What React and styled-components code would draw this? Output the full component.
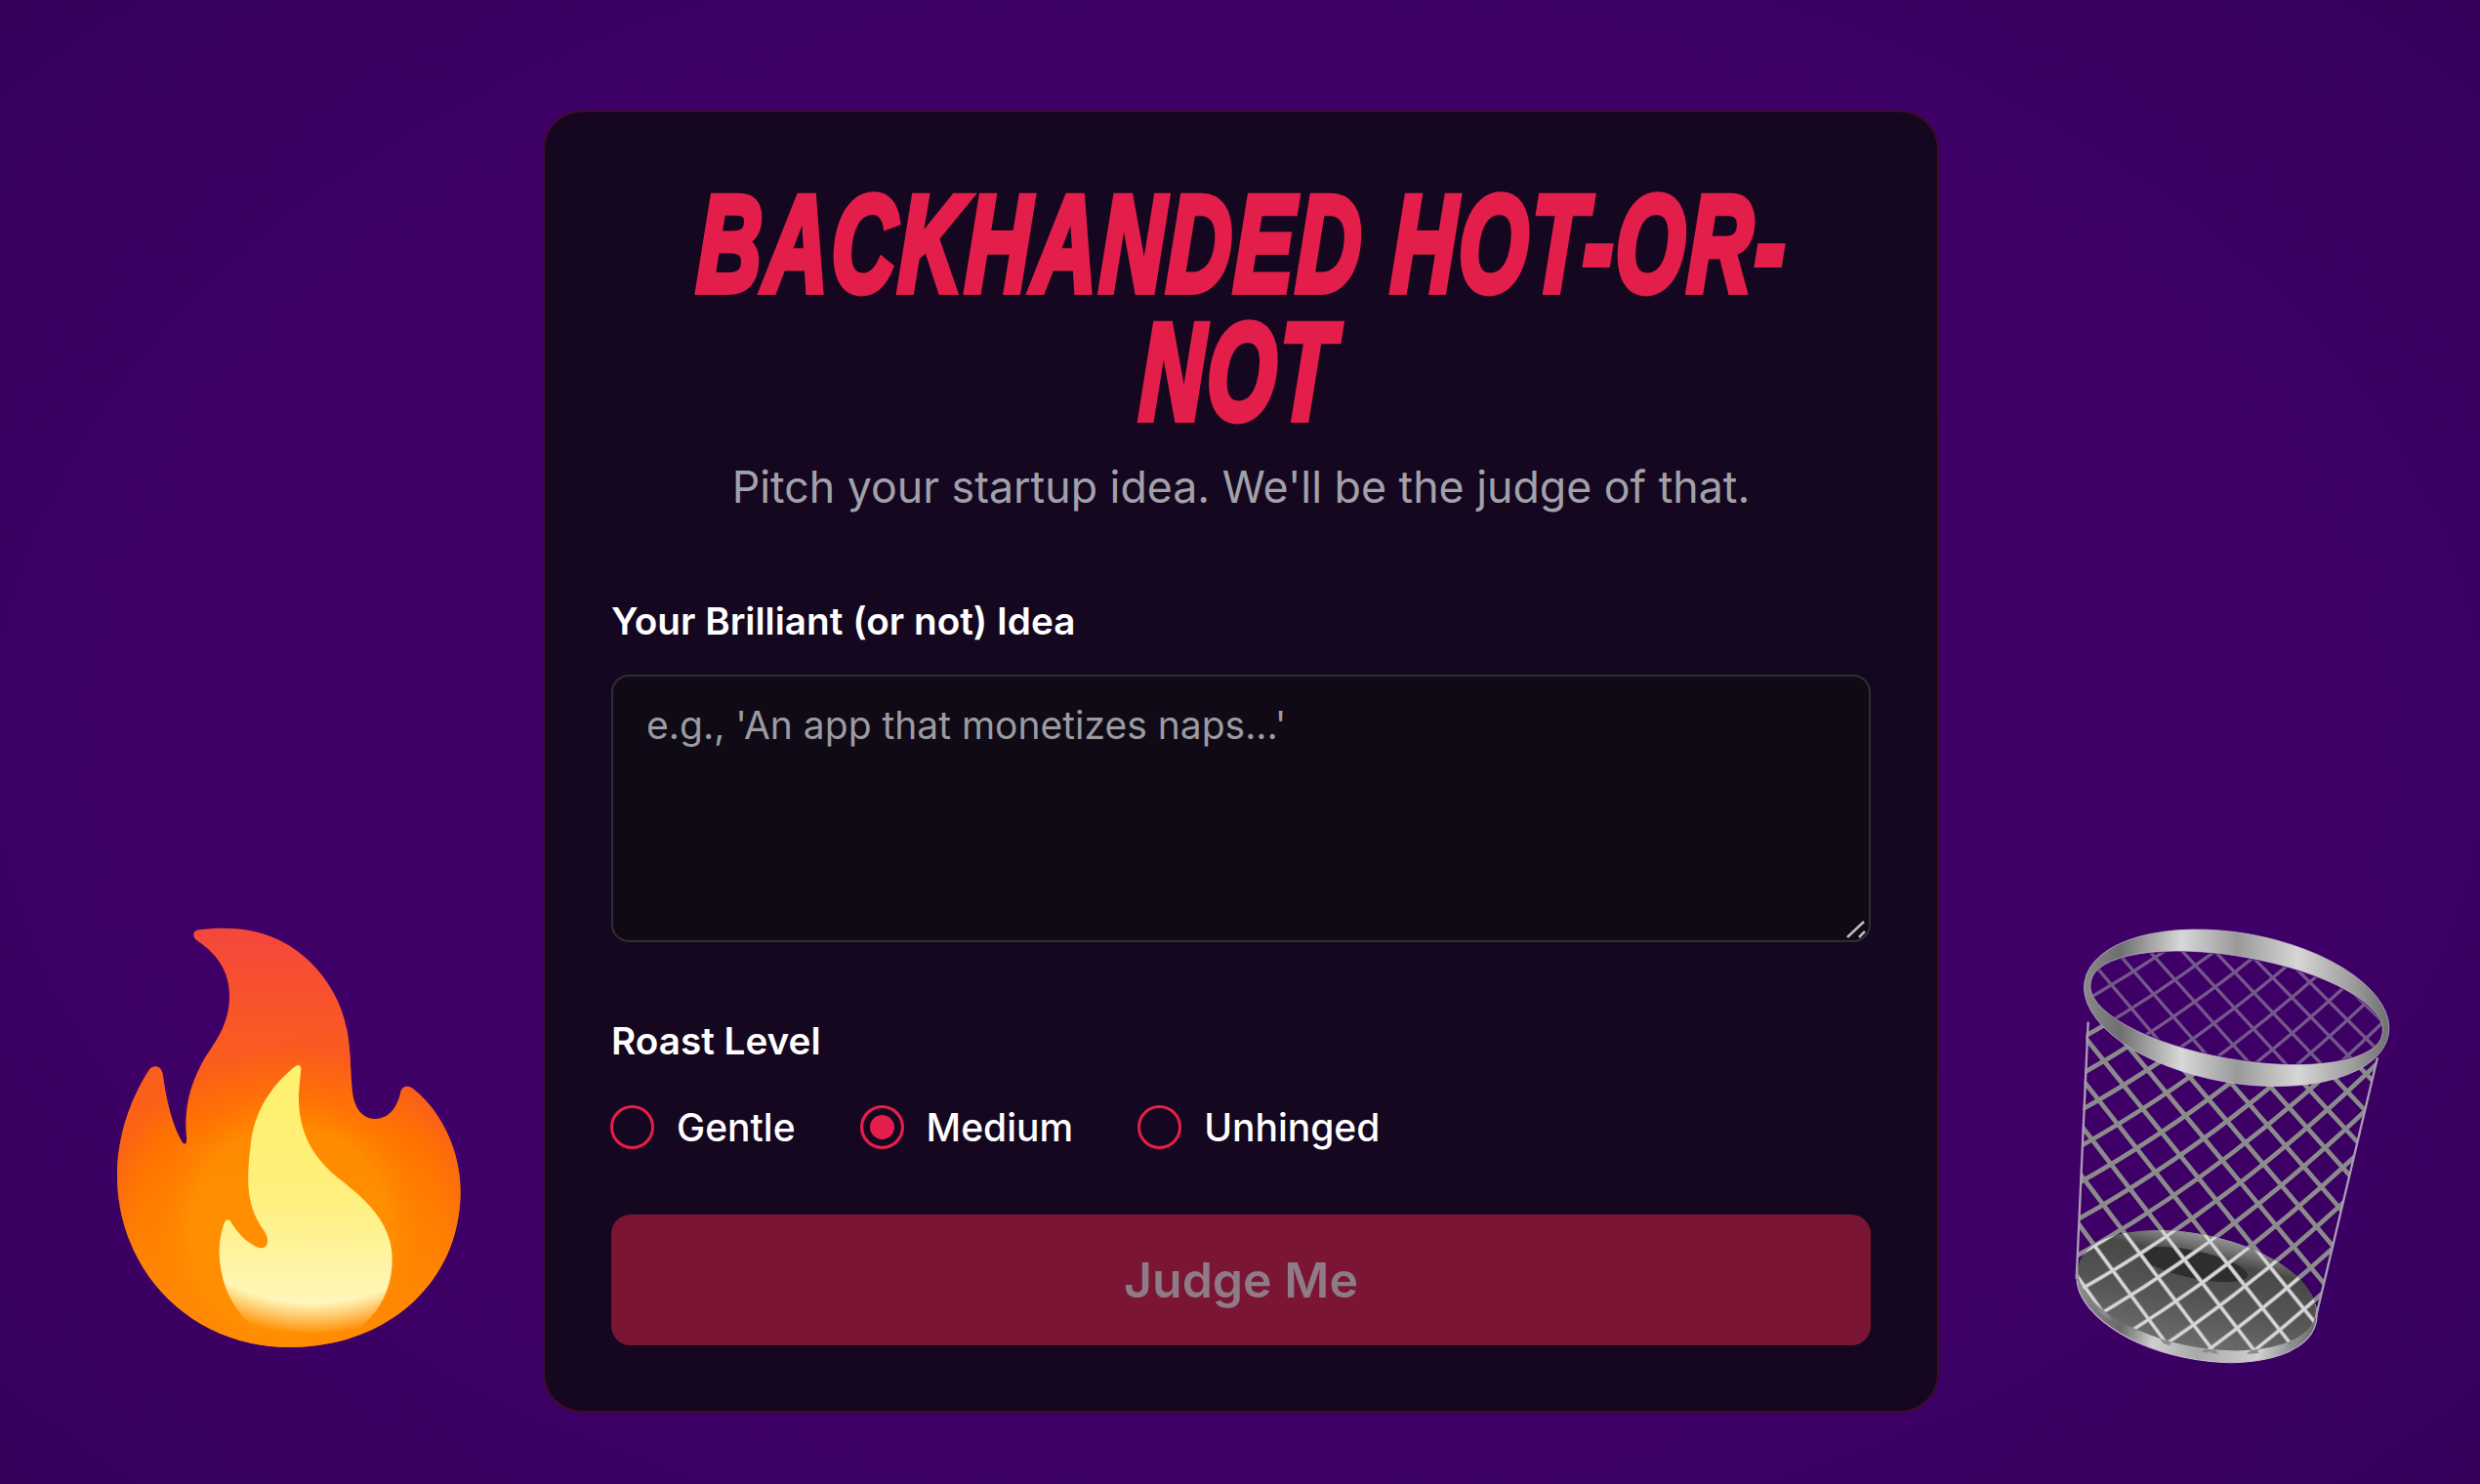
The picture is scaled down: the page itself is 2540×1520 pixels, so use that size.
import React from 'react';
import styled, { createGlobalStyle } from 'styled-components';

const levels = ['Gentle', 'Medium', 'Unhinged'];

// mesh lines of the basket, in zoomed coordinates (viewBox 1200x1470)
const rangeOf = (from, to) => Array.from({ length: to - from + 1 }, (_, i) => from + i);

const meshA = rangeOf(-10, 10).map((i) => {
  const slope = 1.24 - i * 0.03;
  const x0 = 515 + i * 118;
  return `M${x0 - 900} ${860 - 900 * slope}L${x0 + 900} ${860 + 900 * slope}`;
});

// these bow a little, they follow the round side of the basket
const bowY = (y0, x) => y0 - 0.72 * (x - 515) - 0.00022 * (x - 515) * (x - 515);
const bowSlope = (x) => -0.72 - 0.00044 * (x - 515);

const meshB = rangeOf(-8, 10).map((i) => {
  const y0 = 860 + i * 110;
  const xa = -100;
  const xb = 1300;
  const cy = bowY(y0, xa) + (bowSlope(xa) * (xb - xa)) / 2;
  return `M${xa} ${bowY(y0, xa)}Q${(xa + xb) / 2} ${cy} ${xb} ${bowY(y0, xb)}`;
});

function MeshLines({ lines }) {
  return lines.map((d, i) => <path key={i} d={d} fill="none" />);
}

function Flame() {
  return (
    <FlameIcon viewBox="0 0 1320 1440">
      <defs>
        <linearGradient id="flameOuter" x1="0" y1="90" x2="0" y2="1380" gradientUnits="userSpaceOnUse">
          <stop offset="0" stopColor="#f4473c" />
          <stop offset="0.28" stopColor="#fb5a22" />
          <stop offset="0.5" stopColor="#ff7300" />
          <stop offset="1" stopColor="#ff9a05" />
        </linearGradient>
        <radialGradient id="flameEdge" cx="650" cy="1020" r="560" gradientUnits="userSpaceOnUse">
          <stop offset="0.55" stopColor="#ff8f00" stopOpacity="0.9" />
          <stop offset="0.82" stopColor="#ff7300" stopOpacity="0.3" />
          <stop offset="1" stopColor="#f85a20" stopOpacity="0.55" />
        </radialGradient>
        <linearGradient id="flameInner" x1="0" y1="520" x2="0" y2="1300" gradientUnits="userSpaceOnUse">
          <stop offset="0" stopColor="#fff06e" />
          <stop offset="0.5" stopColor="#ffef7c" />
          <stop offset="1" stopColor="#fff8c6" />
        </linearGradient>
        <radialGradient id="flameFade" cx="720" cy="650" r="690" gradientUnits="userSpaceOnUse">
          <stop offset="0.86" stopColor="#fff" />
          <stop offset="1" stopColor="#fff" stopOpacity="0" />
        </radialGradient>
        <mask id="flameMask">
          <rect width="1320" height="1440" fill="url(#flameFade)" />
        </mask>
      </defs>
      <path
        id="flameBody"
        fill="url(#flameOuter)"
        d="M370 97C440 88 530 88 610 125C720 175 800 280 825 400C840 470 835 540 845 610C855 660 885 680 915 678C960 675 980 640 990 600C995 575 1015 572 1035 590C1120 660 1175 780 1175 900C1175 1180 950 1380 650 1380C350 1380 120 1150 120 850C120 720 170 600 220 525C235 510 255 515 260 540C270 620 290 700 320 750C328 760 335 755 333 735C325 640 345 570 390 490C430 430 465 380 465 300C465 210 410 160 365 130C350 118 352 100 370 97Z"
      />
      <path
        fill="url(#flameEdge)"
        d="M333 735C325 640 345 570 390 490L825 400C840 470 835 540 845 610C855 660 885 680 915 678C960 675 980 640 990 600C995 575 1015 572 1035 590C1120 660 1175 780 1175 900C1175 1180 950 1380 650 1380C350 1380 120 1150 120 850C120 720 170 600 220 525C235 510 255 515 260 540C270 620 290 700 320 750C328 760 335 755 333 735Z"
      />
      <path
        fill="url(#flameInner)"
        mask="url(#flameMask)"
        d="M665 518C600 570 540 650 530 760C515 880 520 950 570 1020C590 1050 585 1075 560 1075C530 1070 490 1030 470 995C460 980 450 990 445 1010C430 1060 430 1110 445 1170C480 1300 590 1375 700 1375C840 1375 965 1270 965 1110C965 1000 890 930 800 860C720 795 680 720 678 620C678 580 683 550 685 525C685 510 675 510 665 518Z"
      />
    </FlameIcon>
  );
}

function Trash() {
  return (
    <TrashIcon viewBox="0 0 1200 1470">
      <defs>
        <clipPath id="basketFront">
          <path d="M176 262A455 155 10 0 0 1082 416L1065 490L870 1310A375 170 12 0 1 140 1170Z" />
        </clipPath>
        <clipPath id="basketMouth">
          <ellipse cx="632" cy="337" rx="455" ry="155" transform="rotate(10 632 337)" />
        </clipPath>
        <clipPath id="basketFloor">
          <ellipse cx="510" cy="1205" rx="372" ry="172" transform="rotate(12 510 1205)" />
        </clipPath>
        <linearGradient id="ringMetal" x1="160" y1="0" x2="1105" y2="0" gradientUnits="userSpaceOnUse">
          <stop offset="0" stopColor="#8a8a8a" />
          <stop offset="0.12" stopColor="#6f6f6f" />
          <stop offset="0.32" stopColor="#d8d8d8" />
          <stop offset="0.5" stopColor="#9a9a9a" />
          <stop offset="0.7" stopColor="#d6d6d6" />
          <stop offset="0.88" stopColor="#9c9c9c" />
          <stop offset="1" stopColor="#6c6c6c" />
        </linearGradient>
        <linearGradient id="footMetal" x1="140" y1="0" x2="880" y2="0" gradientUnits="userSpaceOnUse">
          <stop offset="0" stopColor="#8d8d8d" />
          <stop offset="0.22" stopColor="#6a6a6a" />
          <stop offset="0.36" stopColor="#cfcfcf" />
          <stop offset="0.55" stopColor="#a8a8a8" />
          <stop offset="0.8" stopColor="#d0d0d0" />
          <stop offset="1" stopColor="#6e6e6e" />
        </linearGradient>
        <linearGradient id="floorFill" x1="0" y1="1040" x2="0" y2="1380" gradientUnits="userSpaceOnUse">
          <stop offset="0" stopColor="#8e8e8e" />
          <stop offset="0.2" stopColor="#484848" />
          <stop offset="0.6" stopColor="#565656" />
          <stop offset="1" stopColor="#6c6c6c" />
        </linearGradient>
      </defs>

      <g clipPath="url(#basketMouth)" stroke="#74588c" strokeWidth="10">
        <MeshLines lines={meshA} />
        <MeshLines lines={meshB} />
      </g>

      <ellipse cx="510" cy="1225" rx="375" ry="190" transform="rotate(12 510 1225)" fill="url(#footMetal)" stroke="#c9bcd6" strokeWidth="3" />
      <ellipse cx="510" cy="1205" rx="372" ry="172" transform="rotate(12 510 1205)" fill="url(#floorFill)" />
      <ellipse cx="500" cy="1125" rx="170" ry="42" transform="rotate(12 500 1125)" fill="#2e2e2e" />

      <g clipPath="url(#basketFront)" stroke="#8b8b8b" strokeWidth="14">
        <MeshLines lines={meshA} />
        <MeshLines lines={meshB} />
      </g>
      <g clipPath="url(#basketFloor)" stroke="#d6d6d6" strokeWidth="9">
        <MeshLines lines={meshA} />
        <MeshLines lines={meshB} />
      </g>

      <path d="M176 380L140 1170M1065 490L875 1290" stroke="#a99cb6" strokeWidth="7" fill="none" />

      <path
        fillRule="evenodd"
        fill="url(#ringMetal)"
        stroke="#c9bcd6"
        strokeWidth="2"
        d="M165 256A470 228 10 1 0 1099 418A470 228 10 1 0 165 256ZM184 258A455 155 10 1 1 1080 416A455 155 10 1 1 184 258Z"
      />
    </TrashIcon>
  );
}

export default function App() {
  return (
    <Page>
      <GlobalStyle />
      <Flame />
      <Trash />
      <Card>
        <Title>
          <TitleText>
            BACKHANDED HOT-OR-
            <br />
            NOT
          </TitleText>
        </Title>
        <Subtitle>Pitch your startup idea. We'll be the judge of that.</Subtitle>
        <Form>
          <Label htmlFor="idea">Your Brilliant (or not) Idea</Label>
          <IdeaField>
            <IdeaInput id="idea" placeholder="e.g., 'An app that monetizes naps...'" />
            <ResizeGrip viewBox="0 0 20 18">
              <path d="M1 17L18 1M13 17L19 11" />
            </ResizeGrip>
          </IdeaField>
          <RoastLabel>Roast Level</RoastLabel>
          <RadioRow>
            {levels.map((level) => (
              <RadioOption key={level}>
                <RadioCircle $checked={level === 'Medium'} />
                {level}
              </RadioOption>
            ))}
          </RadioRow>
          <SubmitButton type="button">Judge Me</SubmitButton>
        </Form>
      </Card>
    </Page>
  );
}

const GlobalStyle = createGlobalStyle`
  html, body {
    margin: 0;
    padding: 0;
  }

  body {
    font-family: Inter, "Liberation Sans", sans-serif;
    background: #3a0060;
  }

  * {
    box-sizing: border-box;
  }
`;

const Page = styled.div`
  position: relative;
  display: flex;
  justify-content: center;
  width: 2540px;
  height: 1520px;
  padding: 113px 0 0 2px;
  overflow: hidden;
  background: radial-gradient(ellipse 1750px 1150px at 50% 50%, #42006a 0%, #3e0066 65%, #35005c 100%);
`;

const Card = styled.div`
  width: 1430px;
  height: 1334px;
  padding: 67px 68px;
  display: flex;
  flex-direction: column;
  background: #15071f;
  border: 2px solid rgba(233, 30, 76, 0.2);
  border-radius: 40px;
`;

const Title = styled.h1`
  display: flex;
  justify-content: center;
  margin: 0;
  height: 270px;
`;

const TitleText = styled.span`
  flex-shrink: 0;
  margin-top: 2px;
  text-align: center;
  white-space: nowrap;
  font-family: "Liberation Sans", sans-serif;
  font-size: 140px;
  font-weight: 700;
  font-style: italic;
  letter-spacing: 5px;
  line-height: 131px;
  color: #e31e4b;
  -webkit-text-stroke: 8px #e31e4b;
  transform: scaleX(0.648) skewX(-3deg);
`;

const Subtitle = styled.p`
  margin: 16px 0 0;
  text-align: center;
  font-size: 44.7px;
  line-height: 64px;
  color: #a1a1aa;
`;

const Form = styled.div`
  display: flex;
  flex-direction: column;
  margin-top: 77px;
`;

const Label = styled.label`
  display: block;
  font-size: 38.7px;
  font-weight: 600;
  line-height: 56px;
  color: #fff;
`;

const RoastLabel = styled(Label).attrs({ as: 'div' })`
  margin-top: 73px;
`;

const IdeaField = styled.div`
  position: relative;
  margin-top: 27px;
`;

const IdeaInput = styled.textarea`
  display: block;
  width: 100%;
  height: 274px;
  padding: 22px 34px;
  background: #0f0a15;
  border: 2px solid #2f2e34;
  border-radius: 18px;
  outline: none;
  resize: none;
  font-family: inherit;
  font-size: 39px;
  line-height: 56px;
  color: #fff;

  &::placeholder {
    color: #9b9ba2;
  }
`;

const ResizeGrip = styled.svg`
  position: absolute;
  right: 5px;
  bottom: 4px;
  width: 20px;
  height: 18px;

  path {
    fill: none;
    stroke: #b9b9bc;
    stroke-width: 2.6;
  }
`;

const RadioRow = styled.div`
  display: flex;
  gap: 67px;
  margin-top: 32px;
`;

const RadioOption = styled.div`
  display: flex;
  align-items: center;
  gap: 23px;
  height: 56px;
  margin-left: -1px;
  font-size: 39px;
  font-weight: 500;
  color: #fff;
`;

const RadioCircle = styled.span`
  display: block;
  width: 45px;
  height: 45px;
  border-radius: 50%;
  border: 3px solid #e61e4d;
  background: ${(p) => (p.$checked ? '#e61e4d' : 'transparent')};
  box-shadow: ${(p) => (p.$checked ? 'inset 0 0 0 7px #15071f' : 'none')};
`;

const SubmitButton = styled.button`
  width: 100%;
  height: 134px;
  margin-top: 62px;
  border: none;
  border-radius: 20px;
  background: #7a1633;
  font-family: inherit;
  font-size: 50px;
  font-weight: 600;
  color: #8f7b88;
`;

const FlameIcon = styled.svg`
  position: absolute;
  left: 80px;
  top: 920px;
  width: 440px;
  height: 480px;
`;

const TrashIcon = styled.svg`
  position: absolute;
  left: 2080px;
  top: 920px;
  width: 400px;
  height: 490px;
`;
